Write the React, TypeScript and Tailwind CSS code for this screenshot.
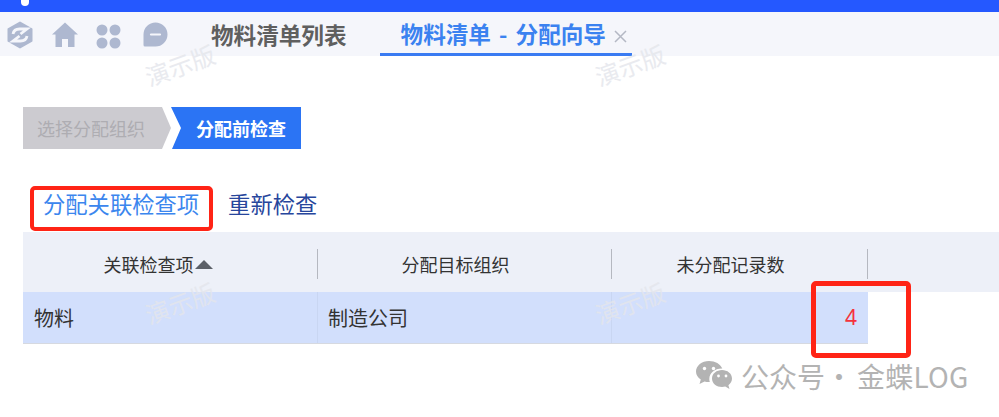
const cjk = "font-['Noto_Sans_CJK_SC','Noto_Sans',sans-serif]";

function Logo() {
  return (
    <svg width="26" height="28" viewBox="0 0 26 28" className="text-[#aeb8d0]">
      <path fill="currentColor" stroke="currentColor" strokeWidth="2" strokeLinejoin="round" d="M13 1.500 24.500 8v12L13 26.500 1.500 20V8z" />
      <path fill="none" stroke="#f5f6fb" strokeWidth="2.800" d="M6 13c.5-3 3-5 6.500-5H20l-6.500 5" />
      <path fill="none" stroke="#f5f6fb" strokeWidth="2.800" d="M20 15c-.5 3-3 5-6.500 5H6l6.500-5" />
    </svg>
  );
}

function HomeIcon() {
  return (
    <svg width="26" height="26" viewBox="0 0 26 26" className="text-[#aeb8d0]">
      <path fill="currentColor" d="M13 0.500 26 12.500h-3.500V25H16v-8h-6v8H3.500V12.500H0z" />
    </svg>
  );
}

function GridIcon() {
  return (
    <svg width="25" height="25" viewBox="0 0 25 25" className="text-[#aeb8d0]">
      <circle cx="6" cy="6" r="5.500" fill="currentColor" />
      <circle cx="19" cy="6" r="5.500" fill="currentColor" />
      <circle cx="6" cy="19" r="5.500" fill="currentColor" />
      <circle cx="19" cy="19" r="5.500" fill="currentColor" />
    </svg>
  );
}

function ChatIcon() {
  return (
    <svg width="25" height="25" viewBox="0 0 25 25" className="text-[#aeb8d0]">
      <path fill="currentColor" d="M12.500 0.500a12 12 0 0 1 0 24H2a1.500 1.500 0 0 1-1.500-1.500V12.500a12 12 0 0 1 12-12z" />
      <path stroke="#f5f6fb" strokeWidth="2.200" strokeLinecap="round" d="M8 12.500h9" />
    </svg>
  );
}

function WeChat() {
  return (
    <svg width="38" height="32" viewBox="0 0 38 32" className="text-[#b3b3b3]">
      <path fill="currentColor" d="M14 1C6.800 1 1 5.700 1 11.500c0 3.300 1.900 6.200 4.800 8.100L4.500 24l5-2.600c1.400.4 2.900.6 4.500.6h.8a10 10 0 0 1-.5-3c0-6 5.600-10.500 12.300-10.500h.7C25.500 4 20.200 1 14 1z" />
      <path fill="currentColor" d="M37 18.500C37 13.500 32.300 10 27 10s-10 3.500-10 8.500S21.700 27 27 27c1.200 0 2.300-.2 3.300-.5l4.200 2.500-1.100-3.800c2.200-1.600 3.600-4 3.600-6.700z" />
      <circle cx="9.500" cy="8.500" r="1.700" fill="#fff" />
      <circle cx="18.500" cy="8.500" r="1.700" fill="#fff" />
      <circle cx="23.500" cy="16" r="1.400" fill="#fff" />
      <circle cx="31" cy="16" r="1.400" fill="#fff" />
    </svg>
  );
}

function Mark({ className }: { className: string }) {
  return (
    <span className={`absolute text-[24px] leading-none font-normal text-[#e4e6ec] opacity-80 -rotate-[20deg] pointer-events-none whitespace-nowrap ${className}`}>
      演示版
    </span>
  );
}

function HeadCell({ width, children }: { width: string; children: React.ReactNode }) {
  return (
    <div className={`${width} shrink-0 h-[30px] flex items-center justify-center border-r border-[#b5b8c0] text-[18px] text-[#333333]`}>
      {children}
    </div>
  );
}

export default function App() {
  return (
    <div className={`relative w-[999px] h-[417px] overflow-hidden bg-white ${cjk}`}>
      {/* top bar */}
      <div className="h-3 bg-[#2558ff] pl-[21px]">
        <div className="w-2 h-[6px] rounded-b-full bg-white" />
      </div>

      {/* tabs */}
      <div className="h-[44px] bg-[#f5f6fb] flex items-center">
        <div className="flex items-center pl-[7px] gap-[13px] h-full pt-[1px]">
          <Logo />
          <div className="ml-[6px]"><HomeIcon /></div>
          <div className="ml-[5px] mt-[3px]"><GridIcon /></div>
          <div className="ml-[9px]"><ChatIcon /></div>
        </div>
        <span className="ml-[43px] mt-[3px] text-[22.6px] leading-none font-bold text-[#5f5f5f]">物料清单列表</span>
        <div className="relative ml-[33px] w-[252px] h-full flex items-center pl-[21px] border-b-[3px] border-[#3a7bf2] pt-[4px]">
          <span className="text-[22.6px] leading-none font-bold text-[#3b82f0] whitespace-nowrap [word-spacing:3px]">物料清单 - 分配向导</span>
          <svg width="13" height="13" viewBox="0 0 13 13" className="absolute left-[234px] top-[18px]">
            <path d="M1 1 12 12M12 1 1 12" stroke="#b4b8c4" strokeWidth="1.500" fill="none" />
          </svg>
        </div>
      </div>

      {/* steps */}
      <div className="mt-[51px] ml-[23px] flex h-[42px] items-stretch">
        <div className="w-[148px] bg-[#cccbd0] text-[#aeadb2] text-[18px] flex items-center pl-[14px] [clip-path:polygon(0_0,139px_0,148px_50%,139px_100%,0_100%)]">
          选择分配组织
        </div>
        <div className="w-[130px] bg-[#2b74f4] text-white text-[18px] font-bold flex items-center pl-[25px] [clip-path:polygon(0_0,100%_0,100%_100%,1px_100%,10px_50%)]">
          分配前检查
        </div>
      </div>

      {/* sub tabs */}
      <div className="mt-[36px] ml-[43px] flex items-center h-[40px] pb-[3px] gap-[29px] text-[22.3px] leading-none whitespace-nowrap">
        <span className="text-[#3b86ee]">分配关联检查项</span>
        <span className="text-[#27469c]">重新检查</span>
      </div>

      {/* table */}
      <div className="mt-[7px] ml-[23px]">
        <div className="h-[60px] pt-[4px] bg-[#edf0f8] flex items-center">
          <HeadCell width="w-[295px] pr-[24px]">
            <span>关联检查项</span>
            <svg width="18" height="9" viewBox="0 0 18 9" className="ml-[1px]"><path d="M9 0 18 9H0z" fill="#5c6068" /></svg>
          </HeadCell>
          <HeadCell width="w-[294px] pr-[18px]">分配目标组织</HeadCell>
          <HeadCell width="w-[256px] pr-[18px]">未分配记录数</HeadCell>
        </div>
        <div className="w-[845px] h-[52px] bg-[#d2dffc] border-b border-[#d6d9e0] flex items-center text-[20px] text-[#333333]">
          <div className="w-[295px] pl-[11px] h-full flex items-center border-r border-[#c9d6f2]">物料</div>
          <div className="w-[294px] pl-[10px] h-full flex items-center border-r border-[#c9d6f2]">制造公司</div>
          <div className="w-[256px] pr-[11px] h-full flex items-center justify-end text-[#f5323c] text-[21px] font-['Noto_Sans',sans-serif]">4</div>
        </div>
      </div>

      {/* watermarks */}
      <Mark className="left-[144px] top-[53px]" />
      <Mark className="left-[594px] top-[53px]" />
      <Mark className="left-[144px] top-[291px]" />
      <Mark className="left-[594px] top-[291px]" />

      {/* red annotations */}
      <div className="absolute left-[30px] top-[186px] w-[183px] h-[45px] border-[4px] border-[#ff2416] rounded-[5px]" />
      <div className="absolute left-[811px] top-[281px] w-[100px] h-[77px] border-[5px] border-[#ff2416] rounded-[5px]" />

      {/* account stamp */}
      <div className="absolute left-[695px] top-[360px] flex items-center text-[#b3b3b3] text-[28px] leading-none whitespace-nowrap">
        <WeChat />
        <span className="ml-[8px]">公众号</span>
        <span className="w-[22px] text-center">·</span>
        <span className="ml-[10px] tracking-[0.2px]">金蝶LOG</span>
      </div>
    </div>
  );
}
